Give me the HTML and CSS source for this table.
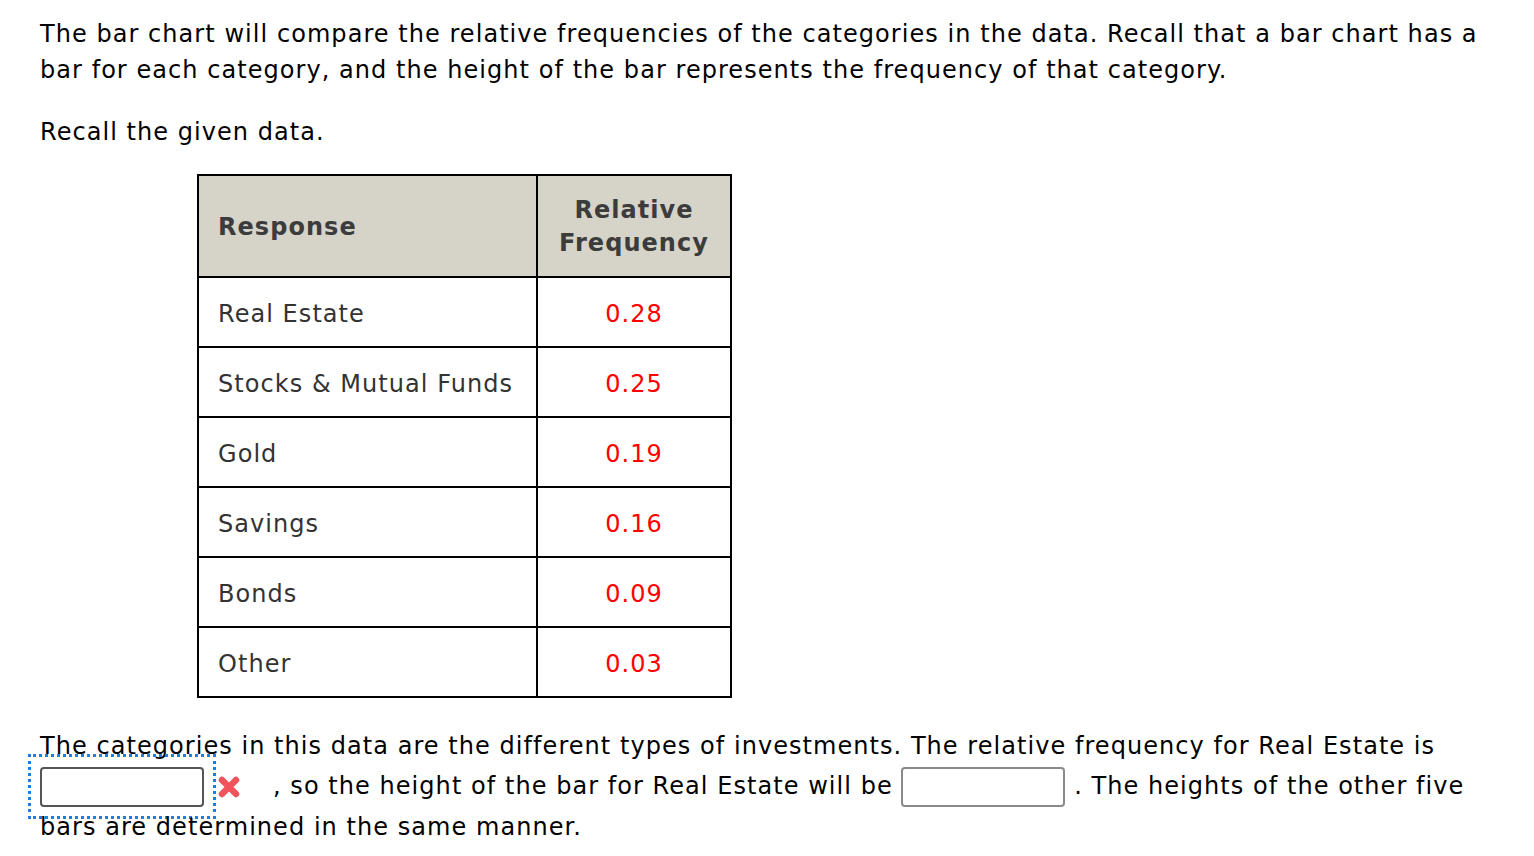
FILE: index.html
```html
<!DOCTYPE html>
<html>
<head>
<meta charset="utf-8">
<link rel="stylesheet" href="styles.css">
</head>
<body>
<div class="page">
  <p class="intro">The bar chart will compare the relative frequencies of the categories in the data. Recall that a bar chart has a bar for each category, and the height of the bar represents the frequency of that category.</p>
  <p class="recall">Recall the given data.</p>
  <table class="data">
    <thead>
      <tr><th class="resp">Response</th><th class="freq">Relative<br>Frequency</th></tr>
    </thead>
    <tbody>
      <tr><td class="resp">Real Estate</td><td class="num">0.28</td></tr>
      <tr><td class="resp">Stocks &amp; Mutual Funds</td><td class="num">0.25</td></tr>
      <tr><td class="resp">Gold</td><td class="num">0.19</td></tr>
      <tr><td class="resp">Savings</td><td class="num">0.16</td></tr>
      <tr><td class="resp">Bonds</td><td class="num">0.09</td></tr>
      <tr><td class="resp">Other</td><td class="num">0.03</td></tr>
    </tbody>
  </table>
  <p class="question">The categories in this data are the different types of investments. The relative frequency for Real Estate is <span class="focus"><span class="box dark"></span></span><svg class="xmark" width="28" height="28" viewBox="0 0 28 28"><path d="M7 7 L21 21 M21 7 L7 21" stroke="#f0535b" stroke-width="6.5" stroke-linecap="round"/></svg><span class="gap"></span>, so the height of the bar for Real Estate will be <span class="box light"></span> . The heights of the other five bars are determined in the same manner.</p>
</div>
</body>
</html>
```
FILE: styles.css
```css
html, body {
  margin: 0;
  padding: 0;
  background: #ffffff;
}
body {
  font-family: "DejaVu Sans", Verdana, sans-serif;
  font-size: 24px;
  line-height: 36px;
  letter-spacing: 1.05px;
  color: #000000;
}
.page {
  padding: 16px 40px 0 40px;
}
.intro {
  margin: 0;
}
.recall {
  margin: 26px 0 0 0;
}
.data {
  border-collapse: collapse;
  margin: 24px 0 0 157px;
  color: #333333;
}
.data th, .data td {
  border: 2px solid #000000;
  padding: 0 19px;
}
.data th {
  background: #d6d3c8;
  color: #3c3c3c;
  font-weight: bold;
  height: 98px;
  padding-top: 2px;
  line-height: 33px;
}
.data th.resp {
  text-align: left;
  width: 299px;
}
.data th.freq {
  text-align: center;
  width: 154px;
}
.data td {
  height: 65px;
  padding-top: 3px;
}
.data td.num {
  color: #ff0000;
  text-align: center;
}
.question {
  margin: 28px 0 0 0;
  line-height: 40px;
}
.focus {
  display: inline-block;
  vertical-align: middle;
  border: 3px dotted #1a7fe0;
  padding: 10px 9px 9px 9px;
  margin: -13px 0 -12px -12px;
  line-height: 0;
  letter-spacing: 0;
}
.box {
  display: inline-block;
  vertical-align: middle;
  width: 160px;
  height: 36px;
  border-radius: 4px;
  background: #ffffff;
  letter-spacing: 0;
}
.box.dark {
  border: 2px solid #555555;
}
.box.light {
  border: 2px solid #8a8a8a;
}
.xmark {
  vertical-align: middle;
  margin: -4px 0 -4px -1px;
}
.gap {
  display: inline-block;
  width: 30px;
}
```
